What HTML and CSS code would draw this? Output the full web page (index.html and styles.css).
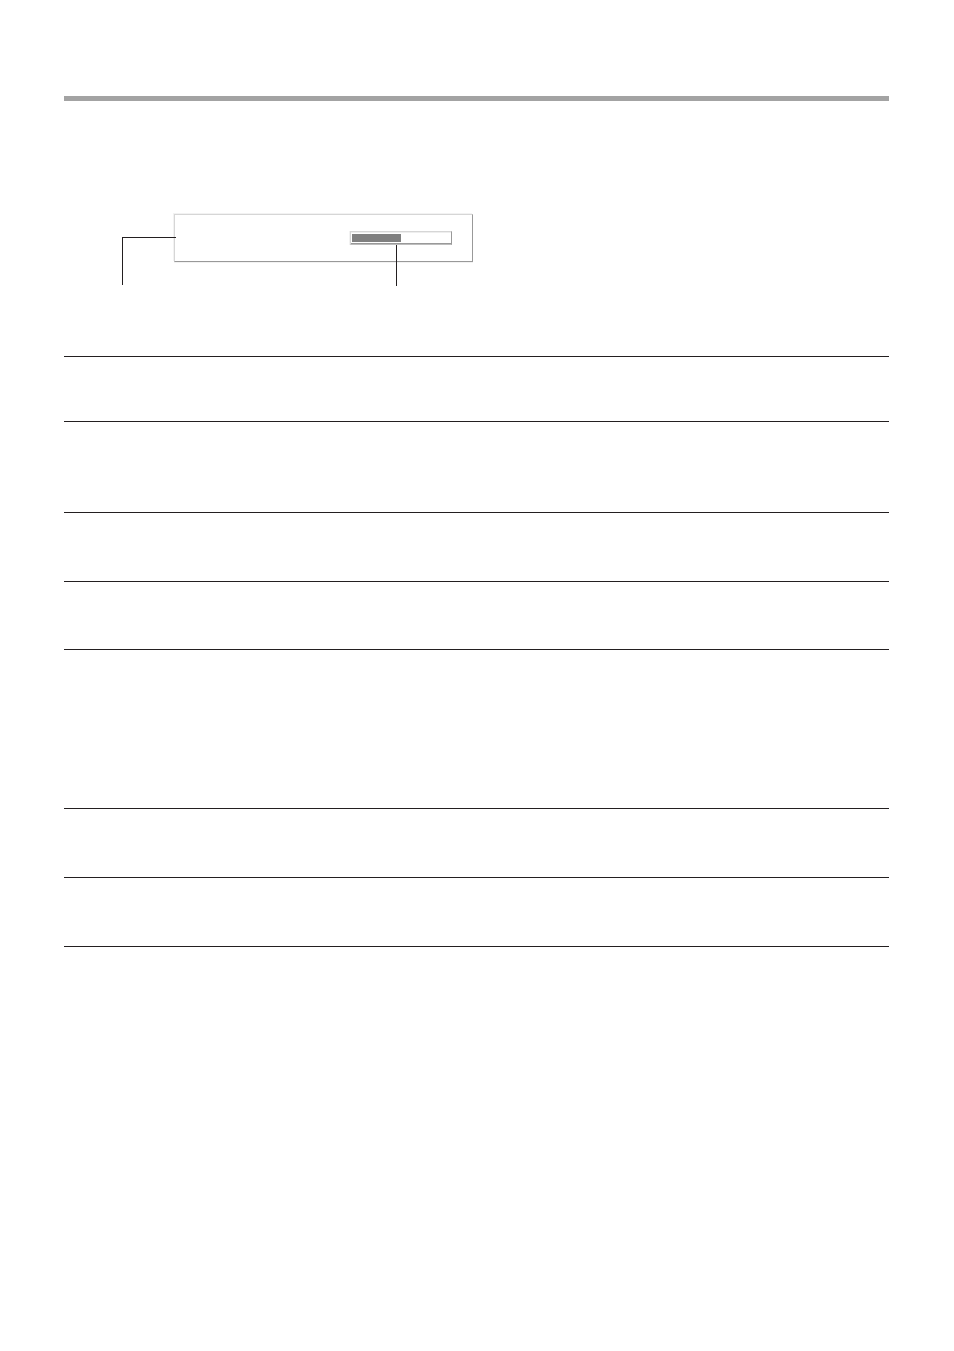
FILE: index.html
```html
<!DOCTYPE html>
<html lang="en">
<head>
<meta charset="utf-8">
<meta name="viewport" content="width=device-width, initial-scale=1">
<title>Image adjustment</title>
<link rel="stylesheet" href="styles.css">
</head>
<body>
<main class="page">
  <hr class="page-rule">
  <figure class="diagram">
    <div class="dialog">
      <progress class="level" value="49" max="99" aria-label="Level"></progress>
      <span class="lead lead-name"></span>
      <span class="lead lead-level"></span>
    </div>
  </figure>
  <div class="entries">
    <section class="entry entry-short"></section>
    <section class="entry entry-medium"></section>
    <section class="entry"></section>
    <section class="entry entry-compact"></section>
    <section class="entry entry-tall"></section>
    <section class="entry"></section>
    <section class="entry"></section>
  </div>
</main>
</body>
</html>
```

FILE: styles.css
```css
* {
  box-sizing: border-box;
}

body {
  margin: 0;
  background: #fff;
  color: #231f20;
  font-family: "Liberation Sans", sans-serif;
}

.page {
  padding: 96px 65px 64px 64px;
}

.page-rule {
  height: 5px;
  margin: 0;
  border: 0;
  background: #a3a3a3;
}

.diagram {
  margin: 0;
  padding: 113px 0 94px 110px;
}

.dialog {
  position: relative;
  display: flex;
  justify-content: flex-end;
  align-items: flex-start;
  width: 299px;
  max-width: 100%;
  padding: 16px 20px;
  border: 1px solid;
  border-color: #d6d6d6 #999 #999 #d6d6d6;
  box-shadow: -1px -1px 0 #f2f2f2, 0 1px 0 #f2f2f2;
}

.level {
  appearance: none;
  width: 102px;
  height: 14px;
  padding: 2px 0 1px 1px;
  border-style: solid;
  border-width: 1px;
  border-color: #d6d6d6 #999 #bdbdbd #d6d6d6;
  background: #fff;
  box-shadow: -1px 0 0 #f2f2f2, inset 0 1px 0 #eee, inset 0 -1px 0 #999;
}

.level::-webkit-progress-inner-element {
  height: 8px;
}

.level::-webkit-progress-bar {
  height: 8px;
  background: transparent;
}

.level::-webkit-progress-value {
  background: #808080;
}

/* Callout lines that cross the dialog's edges */
.lead {
  position: absolute;
  border: 0 solid #231f20;
}

.lead-name {
  top: 22px;
  left: -53px;
  width: 54px;
  height: 48px;
  border-width: 1px 0 0 1px;
}

.lead-level {
  top: 30px;
  right: 75px;
  height: 41px;
  border-left-width: 1px;
}

.entries {
  border-top: 1px solid #231f20;
}

.entry {
  min-height: 69px;
  border-bottom: 1px solid #231f20;
}

.entry-short {
  min-height: 65px;
}

.entry-compact {
  min-height: 68px;
}

.entry-medium {
  min-height: 91px;
}

.entry-tall {
  min-height: 159px;
}
```
